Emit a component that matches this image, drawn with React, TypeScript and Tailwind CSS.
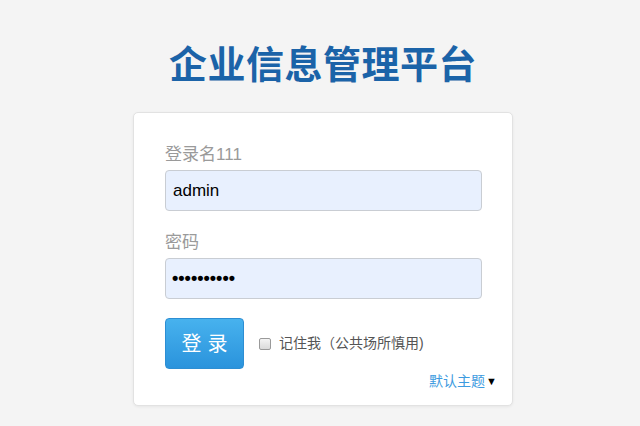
export default function App() {
  return (
    <div className="min-h-screen w-full bg-[#f4f4f4] pl-[6px] font-['Liberation_Sans','Noto_Sans_CJK_SC',sans-serif]">
      {/* Title */}
      <h1 className="pt-[35px] h-[95px] text-center text-[38px] leading-[60px] font-bold text-[#1b63a8] tracking-[0.5px]">
        企业信息管理平台
      </h1>

      {/* Login card */}
      <div className="mx-auto mt-[17px] w-[380px] rounded-[5px] border border-[#e2e2e2] bg-white pt-[30px] pl-[31px] pr-[15px] pb-[13px] shadow-[0_1px_3px_rgba(0,0,0,0.06)]">
        <label className="block text-[17px] leading-[24px] text-[#9a9a9a]">登录名111</label>
        <div className="mt-[3px] flex h-[41px] w-[317px] items-center rounded-[4px] border border-[#c9cdd3] bg-[#e8f0fe] px-[7px] text-[17px] text-black">
          admin
        </div>

        <label className="mt-[20px] block text-[17px] leading-[24px] text-[#9a9a9a]">密码</label>
        <div className="mt-[3px] flex h-[41px] w-[317px] items-center rounded-[4px] border border-[#c9cdd3] bg-[#e8f0fe] px-[6px] text-[18px] font-bold text-black">
          ••••••••••
        </div>

        <div className="mt-[19px] flex items-center">
          <button className="flex h-[51px] w-[79px] items-center justify-center rounded-[4px] border border-[#2d8ed3] bg-gradient-to-b from-[#47b2ee] to-[#2a93dc] pl-[6px] text-[20px] tracking-[6px] text-white">
            登录
          </button>
          <span className="ml-[15px] h-[12px] w-[12px] rounded-[2px] border border-[#9a9a9a] bg-gradient-to-b from-[#f4f4f4] to-[#dadada]" />
          <span className="ml-[8px] text-[14px] text-[#555]">记住我（公共场所慎用)</span>
        </div>

        <div className="mt-[1px] flex items-center justify-end text-[14px] leading-[22px] text-[#3d9be0]">
          默认主题
          <span className="ml-[1px] text-[11px] text-black">▼</span>
        </div>
      </div>
    </div>
  );
}
